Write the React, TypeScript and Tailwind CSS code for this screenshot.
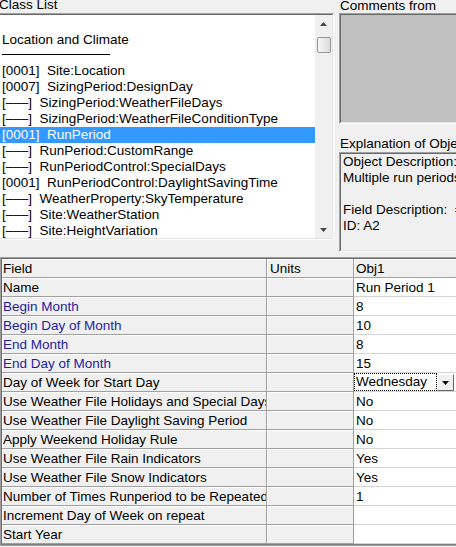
import React from 'react';

type Item = { b: string; t: string; sel?: boolean };

const DASH = '[\u2013\u2013\u2013]';

const items: Item[] = [
  { b: '[0001]', t: 'Site:Location' },
  { b: '[0007]', t: 'SizingPeriod:DesignDay' },
  { b: DASH, t: 'SizingPeriod:WeatherFileDays' },
  { b: DASH, t: 'SizingPeriod:WeatherFileConditionType' },
  { b: '[0001]', t: 'RunPeriod', sel: true },
  { b: DASH, t: 'RunPeriod:CustomRange' },
  { b: DASH, t: 'RunPeriodControl:SpecialDays' },
  { b: '[0001]', t: 'RunPeriodControl:DaylightSavingTime' },
  { b: DASH, t: 'WeatherProperty:SkyTemperature' },
  { b: DASH, t: 'Site:WeatherStation' },
  { b: DASH, t: 'Site:HeightVariation' },
];

type Row = { f: string; req?: boolean; v: string; dd?: boolean };

const rows: Row[] = [
  { f: 'Name', v: 'Run Period 1' },
  { f: 'Begin Month', req: true, v: '8' },
  { f: 'Begin Day of Month', req: true, v: '10' },
  { f: 'End Month', req: true, v: '8' },
  { f: 'End Day of Month', req: true, v: '15' },
  { f: 'Day of Week for Start Day', v: 'Wednesday', dd: true },
  { f: 'Use Weather File Holidays and Special Days', v: 'No' },
  { f: 'Use Weather File Daylight Saving Period', v: 'No' },
  { f: 'Apply Weekend Holiday Rule', v: 'No' },
  { f: 'Use Weather File Rain Indicators', v: 'Yes' },
  { f: 'Use Weather File Snow Indicators', v: 'Yes' },
  { f: 'Number of Times Runperiod to be Repeated', v: '1' },
  { f: 'Increment Day of Week on repeat', v: '' },
  { f: 'Start Year', v: '' },
];

function Scrollbar() {
  return (
    <div className="w-[17px] shrink-0 bg-[#f0f0f0] flex flex-col items-center">
      <div className="h-[17px] w-full flex items-center justify-center">
        <svg width="7" height="4" viewBox="0 0 7 4">
          <path d="M3.5 0 L7 4 L0 4 Z" fill="#4a4a4a" />
        </svg>
      </div>
      <div className="mt-[5px] w-[14px] h-[16px] rounded-[2px] border border-[#979797] bg-gradient-to-r from-[#f6f6f6] to-[#dcdcdc]" />
      <div className="flex-1" />
      <div className="h-[17px] w-full flex items-center justify-center">
        <svg width="7" height="4" viewBox="0 0 7 4">
          <path d="M0 0 L7 0 L3.5 4 Z" fill="#4a4a4a" />
        </svg>
      </div>
    </div>
  );
}

function FixedCell({ w, children, cls = '' }: { w: string; children?: React.ReactNode; cls?: string }) {
  return (
    <div
      className={`${w} shrink-0 h-[19px] bg-[#f0f0f0] border-r border-b border-[#a0a0a0] shadow-[inset_1px_1px_0_#ffffff] leading-[18px] pt-[1px] overflow-hidden whitespace-nowrap ${cls}`}
    >
      {children}
    </div>
  );
}

export default function App() {
  return (
    <div className="w-[456px] h-[547px] overflow-hidden bg-[#f0f0f0] text-[13.5px] text-black font-['Liberation_Sans',Arial,sans-serif]">
      <div className="flex h-[257px]">
        {/* Class list */}
        <div className="w-[336px] -ml-[2px] shrink-0 flex flex-col">
          <div className="h-[13px] leading-[13px] pl-[1px] whitespace-nowrap">
            <div className="-translate-y-[2px]">Class List</div>
          </div>
          <div className="h-[227px] border border-t-[#a0a0a0] border-l-[#a0a0a0] border-r-white border-b-white">
            <div className="h-full border border-t-[#696969] border-l-[#696969] border-r-[#e3e3e3] border-b-[#e3e3e3] bg-white flex">
              <div className="flex-1 overflow-hidden">
                <div className="h-[16px]" />
                <div className="h-[16px] leading-[16px] pt-[1px] pl-[2px] whitespace-pre">Location and Climate</div>
                <div className="h-[16px] pl-[2px] pt-[7px]">
                  <div className="w-[108px] border-t border-black" />
                </div>
                {items.map((it, i) => (
                  <div
                    key={i}
                    className={`h-[16px] leading-[16px] pl-[2px] whitespace-pre ${it.sel ? 'bg-[#3399ff] text-white' : ''}`}
                  >
                    {it.b}
                    {'  '}
                    {it.t}
                  </div>
                ))}
              </div>
              <Scrollbar />
            </div>
          </div>
        </div>

        {/* Right panel */}
        <div className="ml-[5px] w-[130px] shrink-0 flex flex-col">
          <div className="h-[13px] leading-[13px] pl-[1px] whitespace-nowrap">
            <div className="-translate-y-[1px]">Comments from</div>
          </div>
          <div className="h-[111px] border border-t-[#a0a0a0] border-l-[#a0a0a0] border-r-white border-b-white">
            <div className="h-full border border-t-[#696969] border-l-[#696969] border-r-[#e3e3e3] border-b-[#e3e3e3] bg-[#c0c0c0]" />
          </div>
          <div className="h-[28px] pt-[12px] leading-[15px] pl-[1px] whitespace-nowrap">
            Explanation of Object and Current Field
          </div>
          <div className="h-[100px] border border-t-[#a0a0a0] border-l-[#a0a0a0] border-r-white border-b-white">
            <div className="h-full border border-t-[#696969] border-l-[#696969] border-r-[#e3e3e3] border-b-[#e3e3e3] pl-[2px] whitespace-nowrap overflow-hidden">
              <div className="h-[16px] leading-[16px]">Object Description: Specify a range of dates and other parameters for a simulation.</div>
              <div className="h-[16px] leading-[16px]">Multiple run periods may be input, but they may not overlap.</div>
              <div className="h-[16px]" />
              <div className="h-[16px] leading-[16px] whitespace-pre">Field Description:  =[Sunday|Monday|Tuesday|Wednesday|Thursday|Friday|Saturday]</div>
              <div className="h-[16px] leading-[16px]">ID: A2</div>
            </div>
          </div>
        </div>
      </div>

      {/* Grid */}
      <div className="w-[470px] border-t border-l border-b border-t-[#a0a0a0] border-l-[#a0a0a0] border-b-[#a0a0a0]">
        <div className="border-t border-l border-b border-t-[#696969] border-l-[#696969] border-b-[#808080]">
          <div className="flex">
            <FixedCell w="w-[265px]" cls="pl-[1px]">Field</FixedCell>
            <FixedCell w="w-[87px]" cls="pl-[3px]">Units</FixedCell>
            <FixedCell w="flex-1" cls="pl-[2px]">Obj1</FixedCell>
          </div>
          {rows.map((r, i) => (
            <div key={i} className="flex">
              <FixedCell w="w-[265px]" cls={`pl-[1px] ${r.req ? 'text-[#1e1ea0]' : ''}`}>
                {r.f}
              </FixedCell>
              <FixedCell w="w-[87px]" />
              {r.dd ? (
                <div className="flex-1 h-[19px] bg-white border-b border-[#d4d4d4] flex">
                  <div className="w-[83px] h-[18px] border border-dotted border-black leading-[16px] pl-[1px] whitespace-nowrap">
                    {r.v}
                  </div>
                  <div className="w-[17px] h-[17px] mt-[1px] bg-[#f0f0f0] border border-t-white border-l-white border-r-[#696969] border-b-[#696969] flex items-center justify-center">
                    <svg width="7" height="4" viewBox="0 0 7 4">
                      <path d="M0 0 L7 0 L3.5 4 Z" fill="#000" />
                    </svg>
                  </div>
                </div>
              ) : (
                <div className="flex-1 h-[19px] bg-white border-b border-[#d4d4d4] leading-[18px] pt-[1px] pl-[2px] whitespace-nowrap overflow-hidden">
                  {r.v}
                </div>
              )}
            </div>
          ))}
        </div>
      </div>
    </div>
  );
}
